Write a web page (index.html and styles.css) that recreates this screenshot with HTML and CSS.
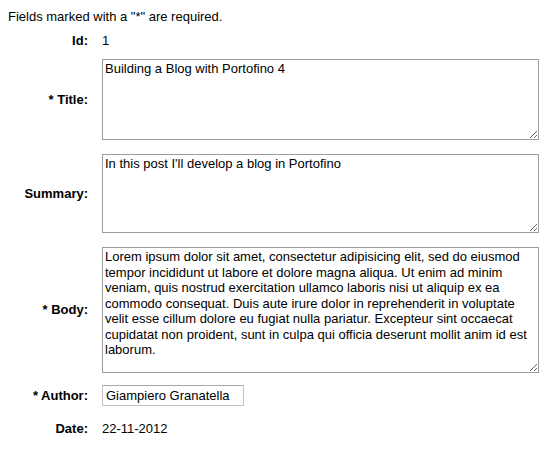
FILE: index.html
```html
<!DOCTYPE html>
<html lang="en">
<head>
  <meta charset="UTF-8">
  <meta name="viewport" content="width=device-width, initial-scale=1.0">
  <title>Edit Post</title>
  <link rel="stylesheet" href="styles.css">
</head>
<body>

<form class="post-form">
  <p class="required-note">Fields marked with a "*" are required.</p>

  <div class="row row-id">
    <label class="label">Id:</label>
    <div class="value">1</div>
  </div>

  <div class="row row-title">
    <label class="label" for="title">* Title:</label>
    <textarea id="title" class="field field-title">Building a Blog with Portofino 4</textarea>
  </div>

  <div class="row row-summary">
    <label class="label" for="summary">Summary:</label>
    <textarea id="summary" class="field field-summary">In this post I'll develop a blog in Portofino</textarea>
  </div>

  <div class="row row-body">
    <label class="label" for="body">* Body:</label>
    <textarea id="body" class="field field-body">Lorem ipsum dolor sit amet, consectetur adipisicing elit, sed do eiusmod tempor incididunt ut labore et dolore magna aliqua. Ut enim ad minim veniam, quis nostrud exercitation ullamco laboris nisi ut aliquip ex ea commodo consequat. Duis aute irure dolor in reprehenderit in voluptate velit esse cillum dolore eu fugiat nulla pariatur. Excepteur sint occaecat cupidatat non proident, sunt in culpa qui officia deserunt mollit anim id est laborum.</textarea>
  </div>

  <div class="row row-author">
    <label class="label" for="author">* Author:</label>
    <input type="text" id="author" class="text-input" value="Giampiero Granatella">
  </div>

  <div class="row row-date">
    <label class="label">Date:</label>
    <div class="value">22-11-2012</div>
  </div>
</form>

</body>
</html>
```
FILE: styles.css
```css
body {
  font-family: "Liberation Sans", Arial, Helvetica, sans-serif;
  font-size: 13px;
  line-height: 16px;
  color: #000;
  background-color: #fff;
  margin: 8px;
  padding-top: 1px;
}
.required-note {
  margin: 0;
}
.row {
  display: flex;
  align-items: center;
}
.label {
  width: 80px;
  margin-right: 14px;
  text-align: right;
  font-weight: bold;
  flex-shrink: 0;
}
.row-id {
  margin-top: 8px;
}
.row-title {
  margin-top: 10px;
}
.row-summary,
.row-body {
  margin-top: 14px;
}
.row-author {
  margin-top: 12px;
}
.row-date {
  margin-top: 15px;
}
.field {
  box-sizing: border-box;
  width: 437px;
  margin: 0;
  padding: 1px 2px;
  border: 1px solid #9c9c9c;
  font-family: "Liberation Sans", Arial, Helvetica, sans-serif;
  font-size: 13px;
  line-height: 15.5px;
  color: #000;
  background-color: #fff;
}
.field-title {
  height: 81px;
}
.field-summary {
  height: 79px;
}
.field-body {
  height: 126px;
}
.text-input {
  box-sizing: border-box;
  width: 142px;
  height: 21px;
  margin: 0;
  padding: 1px 3px;
  border: 1px solid #c2c2c2;
  border-top-color: #a8a8a8;
  font-family: "Liberation Sans", Arial, Helvetica, sans-serif;
  font-size: 13px;
  color: #000;
}
```
